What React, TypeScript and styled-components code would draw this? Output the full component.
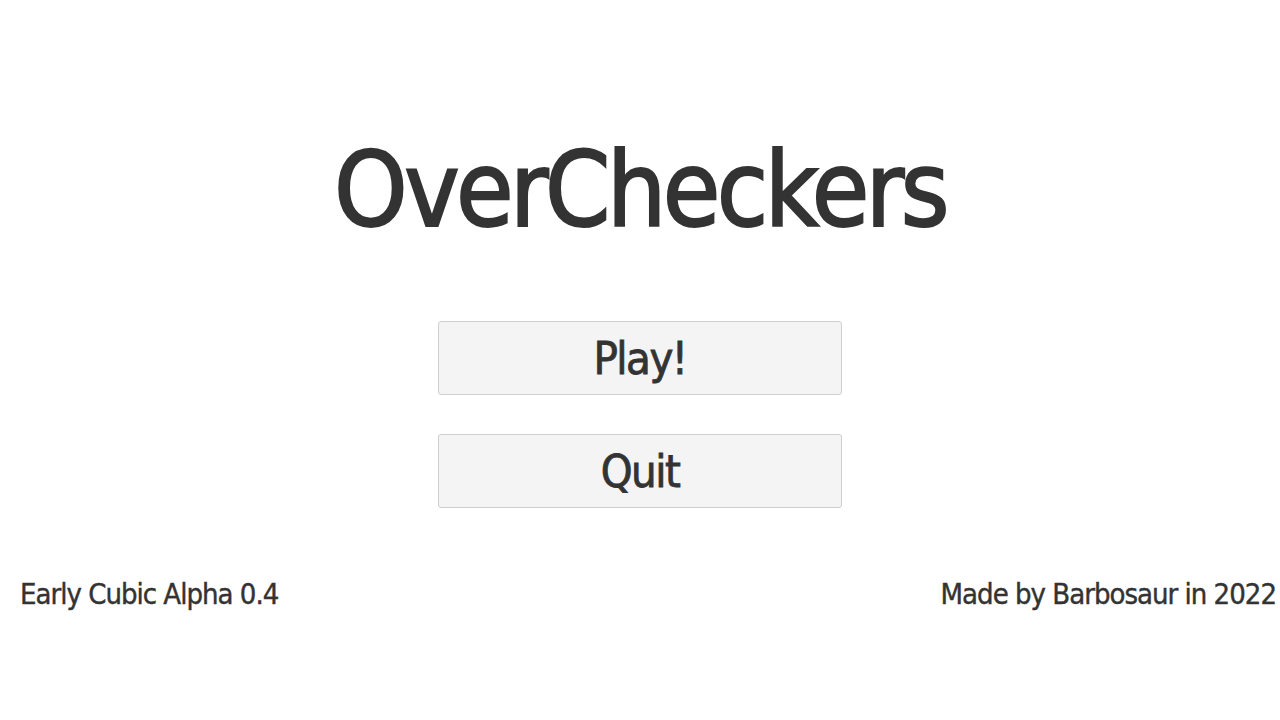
import React from 'react'
import styled, { createGlobalStyle } from 'styled-components'

const GlobalStyle = createGlobalStyle`
  html, body {
    margin: 0;
    padding: 0;
    background: #ffffff;
  }
  body {
    font-family: 'DejaVu Sans Condensed', 'Liberation Sans', sans-serif;
    color: #333333;
  }
`

const Page = styled.div`
  width: 1280px;
  height: 720px;
  display: flex;
  flex-direction: column;
  align-items: center;
  overflow: hidden;
`

const Title = styled.h1`
  margin: 128px 0 0;
  height: 124px;
  line-height: 124px;
  font-size: 104px;
  font-weight: 400;
  color: #333;
  letter-spacing: -3.5px;
  -webkit-text-stroke: 2px #333;
`

const Menu = styled.div`
  margin-top: 69px;
  display: flex;
  flex-direction: column;
  gap: 39px;
`

const MenuButton = styled.button`
  width: 404px;
  height: 74px;
  box-sizing: border-box;
  border: 1px solid #cfcfcf;
  border-radius: 3px;
  background: #f4f4f4;
  color: #333;
  font-family: inherit;
  font-size: 45px;
  letter-spacing: -1.5px;
  -webkit-text-stroke: 0.8px #333;
  line-height: 1;
  padding: 0;
  cursor: pointer;
`

const Footer = styled.div`
  margin-top: 68px;
  width: 100%;
  box-sizing: border-box;
  padding: 0 4px 0 20px;
  display: flex;
  justify-content: space-between;
  align-items: center;
  font-size: 29px;
  letter-spacing: -1px;
  line-height: 36px;
  -webkit-text-stroke: 0.4px #333;
`

export default function App() {
  return (
    <>
      <GlobalStyle />
      <Page>
        <Title>OverCheckers</Title>
        <Menu>
          <MenuButton>Play!</MenuButton>
          <MenuButton>Quit</MenuButton>
        </Menu>
        <Footer>
          <span>Early Cubic Alpha 0.4</span>
          <span>Made by Barbosaur in 2022</span>
        </Footer>
      </Page>
    </>
  )
}
